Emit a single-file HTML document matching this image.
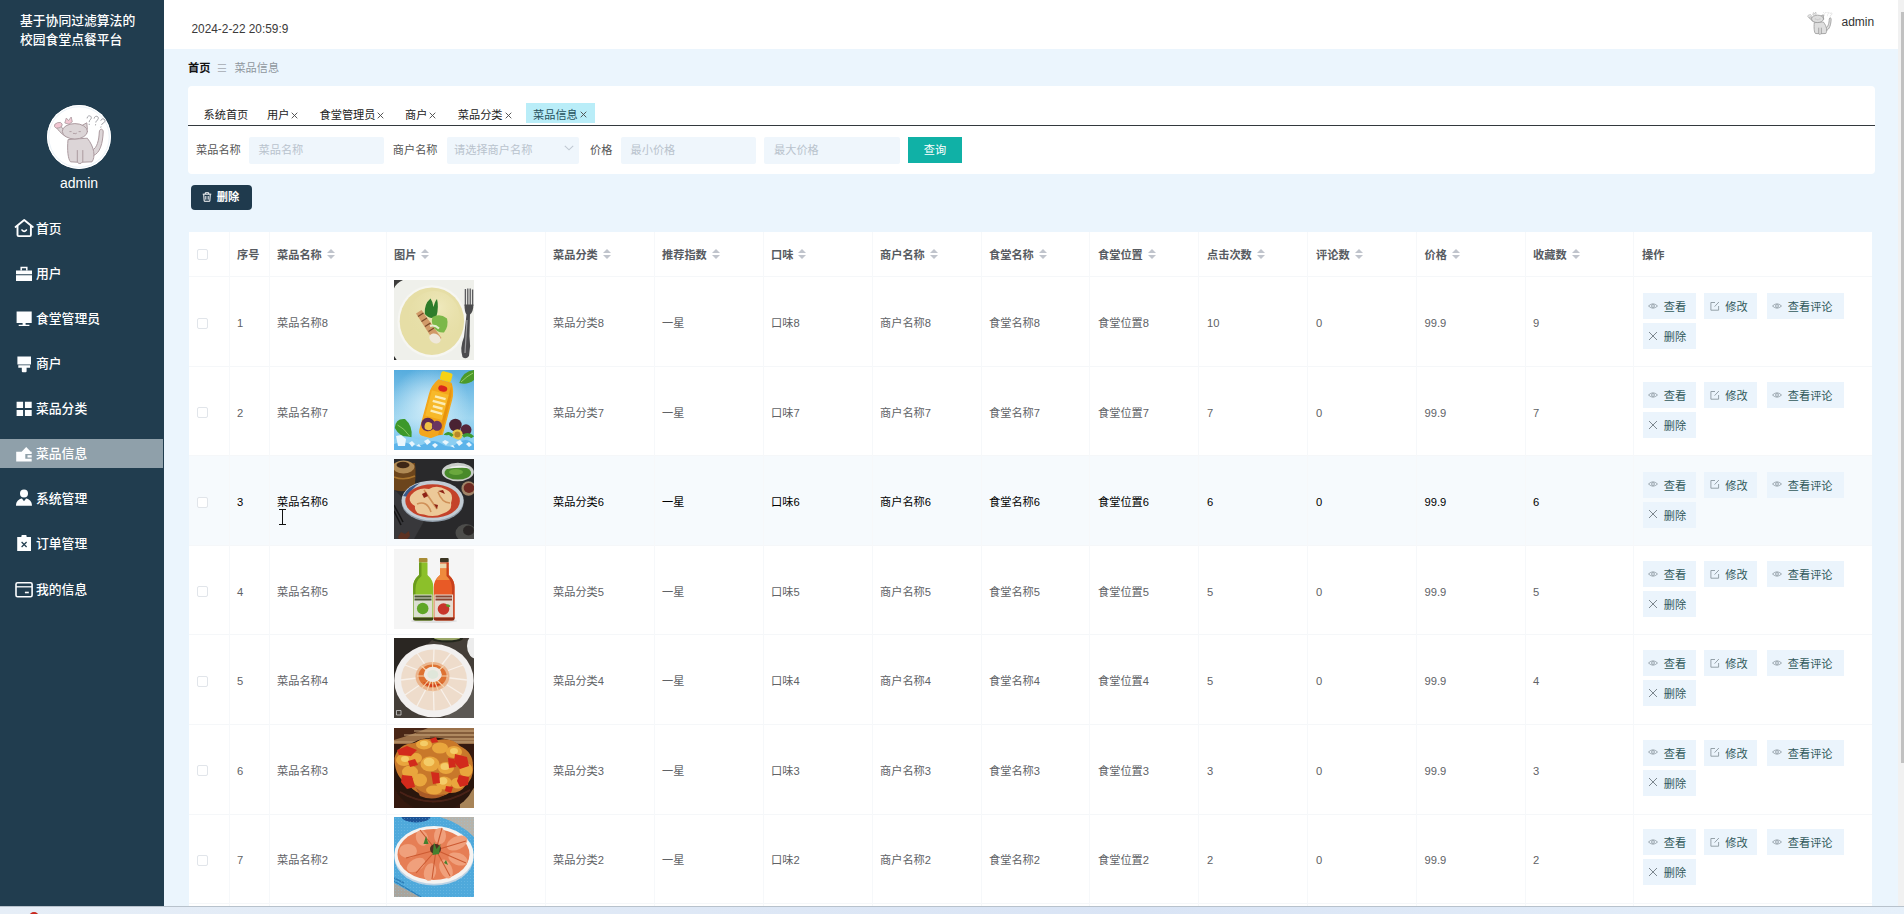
<!DOCTYPE html>
<html lang="zh-CN"><head><meta charset="utf-8"><title>菜品信息</title>
<style>
*{box-sizing:border-box;margin:0;padding:0}
html,body{width:1904px;height:914px;overflow:hidden;background:#ebf5fd;font-family:"Liberation Sans", "Noto Sans CJK SC", sans-serif;font-size:11.2px;color:#606266}
.abs{position:absolute}
#side{position:absolute;left:0;top:0;width:164px;height:906px;background:#213d4f;color:#fff}
#side .title{position:absolute;left:20px;top:11px;font-size:12.8px;line-height:19px;white-space:nowrap;color:#fff;font-weight:500}
#side .ava{position:absolute;left:47px;top:105px;width:64px;height:64px;border-radius:50%;background:#fff;overflow:hidden}
#side .uname{position:absolute;left:0;width:158px;top:174px;text-align:center;font-size:14px;line-height:18px;color:#fff}
.mi{position:absolute;left:0;width:163px;height:29px;line-height:29px;font-size:12.8px;color:#fff;white-space:nowrap;font-weight:500}
.mi svg{position:absolute;left:14px;top:4.5px;width:20px;height:20px}
.mi span{position:absolute;left:36px;top:0}
.mi.act{background:#8fa0aa}
#hdr{position:absolute;left:164px;top:0;width:1734px;height:48.6px;background:#fff}
#hdr .date{position:absolute;left:27.5px;top:21px;font-size:11.85px;line-height:16px;color:#3a3a3a}
#hdr .adm{position:absolute;left:1677.5px;top:14px;font-size:12px;line-height:16px;color:#333}
#hdr .sava{position:absolute;left:1643px;top:11.5px;width:24px;height:24px}
#bc{position:absolute;left:188px;top:60px;font-size:11.2px;line-height:16px;white-space:nowrap}
#bc b{color:#111;font-weight:bold}
#bc i{font-style:normal;color:#b0b6bd;margin:0 7.5px 0 6.5px;font-size:11px}
#bc span{color:#8f979e}
#card{position:absolute;left:188px;top:86px;width:1687px;height:87.8px;background:#fff;border-radius:4px}
#card .line{position:absolute;left:0;top:39px;width:1687px;height:1px;background:#33393e}
.tab{position:absolute;top:17px;height:23px;line-height:24.6px;font-size:11.2px;color:#222;white-space:nowrap;padding:0 8px}
.tab.act{background:#b9edf8;color:#27525e;top:16.5px;height:20.5px;line-height:25.6px;padding:0 8.6px 0 7.5px}
.tab em{font-style:normal;display:inline-block;width:7px;height:7px;margin-left:2px;position:relative;top:-0.1px}
.tab em svg{display:block;width:7px;height:7px}
.lbl{position:absolute;top:56px;line-height:16px;font-size:11.2px;color:#555}
.inp{position:absolute;top:50.5px;height:27px;background:#eff6fc;border-radius:2px;font-size:11.2px;line-height:27px;color:#b9c3cd;padding-left:10px;white-space:nowrap}
#qbtn{position:absolute;left:720px;top:50.7px;width:54px;height:26.6px;background:#10b1a6;color:#fff;font-size:11.2px;line-height:26px;text-align:center}
#del{position:absolute;left:191px;top:185px;width:61px;height:25px;background:#1f3a4d;border-radius:4px;color:#fff;font-size:11.2px;font-weight:bold;line-height:25px}
#del svg{position:absolute;left:10.5px;top:7px;width:10px;height:10px}
#del span{position:absolute;left:25.8px;top:0.3px}
#tbl{position:absolute;left:189px;top:232px;width:1683px;height:674px;background:#fff;overflow:hidden}
.hr{position:absolute;left:0;top:0;width:1684px;height:46.5px}
.hl{position:absolute;left:0;width:1684px;height:1px;background:#f5f7f9}
.hovbg{position:absolute;left:0;top:223.6px;width:1684px;height:89.6px;background:#f6fafd}
.th{position:absolute;top:14.6px;line-height:16px;font-weight:bold;color:#575b61;white-space:nowrap;font-size:11.2px}
.th i{display:inline-block;position:relative;width:8px;height:10px;margin-left:5px;vertical-align:-1px}
.th i:before{content:"";position:absolute;left:0;top:-0.8px;border:4px solid transparent;border-top-width:0;border-bottom:4px solid #c0c4cc}
.th i:after{content:"";position:absolute;left:0;top:5.5px;border:4px solid transparent;border-bottom-width:0;border-top:4px solid #c0c4cc}
.row{position:absolute;left:0;width:1684px;height:89.5px}
.row.hov{color:#000}
.td{position:absolute;top:36.5px;line-height:16px;white-space:nowrap;font-size:11.2px}
.cb{position:absolute;left:8px;width:11px;height:11px;border:1px solid #e1e5ea;border-radius:2px;background:#fff}
.img{position:absolute;left:205px;top:1.5px;width:80px;height:80px;overflow:hidden}
.img svg{display:block;width:80px;height:80px}
.vl{position:absolute;top:0;width:1px;height:674px;background:#f6f8fa}
.btn{position:absolute;height:26px;background:#ebf4fc;color:#30585a;font-size:11.2px;line-height:28.4px;white-space:nowrap}
.btn svg{position:absolute;left:5.8px;top:7.7px;width:10px;height:10px}
.btn span{position:absolute;left:21.3px;top:0}
#bot{position:absolute;left:0;top:906px;width:1904px;height:8px;background:linear-gradient(90deg,#e6eef7,#d9e4f5 60%,#e6f0fa);border-top:1px solid #b8c2cc}
#sb{position:absolute;left:1898px;top:0;width:6px;height:906px;background:#f1f1f1}
#sb div{position:absolute;left:3px;top:12px;width:3px;height:751px;background:#c1c1c1}
</style></head><body>
<div id="side">
<div class="title">基于协同过滤算法的<br>校园食堂点餐平台</div>
<div class="ava"><svg viewBox="0 0 64 64" width="64" height="64"><circle cx="32" cy="32" r="32" fill="#fff"/><circle cx="32" cy="32" r="30.3" fill="none" stroke="#e3edf5" stroke-width="0.8"/><g fill="#dcd5d7" stroke="#ab9a9f" stroke-width="1" stroke-linejoin="round" stroke-linecap="round"><path d="M45.5 45 C50 43.500 52 35 52.300 27 C52.500 23.300 56.300 23.300 56.200 27 C55.800 38 53 48.500 46.500 50.500Z"/><path d="M18.500 31.500 C14 28.500 11 25 8.800 21.500 L12.500 18.800 C14.500 23 17 25.500 21 27.500Z"/><path d="M21 35 C20 45 21 54 23.500 56.800 L30.500 57.200 C31 59 34.500 59 35 57.200 L45 56.800 C48.500 52 47.500 42 40.500 33.500Z"/><path d="M30.300 45.500 V56.800 M35.800 45.500 V56.800" fill="none"/><path d="M35 20.500 L39.800 17.800 L40.300 24Z"/><ellipse cx="27.900" cy="26.300" rx="12.600" ry="7.700"/></g><g fill="#f1c6d2" stroke="#ab9a9f" stroke-width="0.800" stroke-linejoin="round"><ellipse cx="11.300" cy="20.300" rx="4" ry="2.700" transform="rotate(-18 11.300 20.300)"/><path d="M17.800 18 L19.300 13 L21.500 15.600 L24.200 12 L25.300 16.800 L22 19.200Z"/></g><g fill="none" stroke="#ab9a9f" stroke-width="0.900" stroke-linecap="round"><path d="M22.800 26.600h1.400M32 26.600h1.400M26.200 28.300q0.900 1.100 1.700 0q0.900 1.100 1.700 0"/></g><g fill="none" stroke="#9a9a9f" stroke-width="0.900" stroke-linecap="round"><path transform="translate(42 15.2) rotate(0)" d="M-1.9 -2.2c0-2.9 4.2-2.9 4.2-0.3c0 2-2.1 2-2.1 4M0.2 4v0.4"/><path transform="translate(48.8 15.6) rotate(6)" d="M-1.9 -2.2c0-2.9 4.2-2.9 4.2-0.3c0 2-2.1 2-2.1 4M0.2 4v0.4"/><path transform="translate(55 18) rotate(18)" d="M-1.9 -2.2c0-2.9 4.2-2.9 4.2-0.3c0 2-2.1 2-2.1 4M0.2 4v0.4"/></g></svg></div>
<div class="uname">admin</div>
<div class="mi" style="top:213.5px"><svg viewBox="0 0 20 20"><path d="M1.600 8.900 L10.200 1.900 L18.800 8.900" fill="none" stroke="#fdfeff" stroke-width="1.900" stroke-linejoin="round" stroke-linecap="round"/><path d="M3.500 7.800 V16.900 Q3.500 18.100 4.700 18.100 H15.700 Q16.900 18.100 16.900 16.900 V7.800" fill="none" stroke="#fdfeff" stroke-width="1.900" stroke-linejoin="round"/><path d="M8 12 Q10.200 14.800 12.400 12" fill="none" stroke="#fdfeff" stroke-width="1.600" stroke-linecap="round"/></svg><span>首页</span></div>
<div class="mi" style="top:258.5px"><svg viewBox="0 0 20 20"><path d="M2 7.4H18V11.3H2Z M2 12.2H18V17.9H2Z" fill="#fdfeff"/><path d="M7.2 7.4V4.6H12.8V7.4" fill="none" stroke="#fdfeff" stroke-width="1.5"/></svg><span>用户</span></div>
<div class="mi" style="top:303.5px"><svg viewBox="0 0 20 20"><path d="M2.6 3.4H17.7V14.9H2.6Z M8.6 14.9H11.6V16.8H8.6Z M4.7 16.8H15.4V18H4.7Z" fill="#fdfeff"/></svg><span>食堂管理员</span></div>
<div class="mi" style="top:348.5px"><svg viewBox="0 0 20 20"><path d="M3.4 3.4H17V11.5H3.4Z M4.3 12.3H16.1V14.7H4.3Z M7.8 14.7H12.6V18.2Q12.6 19.2 11.6 19.2H8.8Q7.8 19.2 7.8 18.2Z" fill="#fdfeff"/></svg><span>商户</span></div>
<div class="mi" style="top:393.5px"><svg viewBox="0 0 20 20"><path d="M2.6 3.8H9.1V9.9H2.6Z M10.9 3.8H17.7V9.9H10.9Z M2.6 12.1H9.1V18H2.6Z M10.9 12.1H17.7V18H10.9Z" fill="#fdfeff"/></svg><span>菜品分类</span></div>
<div class="mi act" style="top:439.0px"><svg viewBox="0 0 20 20"><path d="M2.2 7.7H7.6L12.2 2.9L16.8 7.7H17.7V9.9H11.3V14.7H17.7V17.4H2.2Z M13.5 11.2H17.7V13.4H13.5Z" fill="#fdfeff"/></svg><span>菜品信息</span></div>
<div class="mi" style="top:483.5px"><svg viewBox="0 0 20 20"><circle cx="10" cy="5.6" r="4" fill="#fdfeff"/><path d="M2 17.8C2 13.4 4.6 11.2 7.9 10.6L10 13.2L12.1 10.6C15.4 11.2 18 13.4 18 17.8Z" fill="#fdfeff"/></svg><span>系统管理</span></div>
<div class="mi" style="top:528.5px"><svg viewBox="0 0 20 20"><path d="M3.2 3.9H7.4V2.9Q7.4 2.1 8.2 2.1H11.8Q12.6 2.1 12.6 2.9V3.9H17V17.9H3.2Z" fill="#fdfeff"/><path d="M7.6 9L12.6 14M12.6 9L7.6 14" stroke="#213d4f" stroke-width="1.2" fill="none"/></svg><span>订单管理</span></div>
<div class="mi" style="top:574.5px"><svg viewBox="0 0 20 20"><rect x="2" y="3.7" width="16.1" height="14.1" rx="1.6" fill="none" stroke="#fdfeff" stroke-width="1.6"/><path d="M2 7.8H18" stroke="#fdfeff" stroke-width="1.3"/><path d="M10.9 13.5H14.8" stroke="#fdfeff" stroke-width="1.6"/></svg><span>我的信息</span></div>
</div>
<div id="hdr"><div class="date">2024-2-22 20:59:9</div><div class="sava"><svg viewBox="6 12 54 50" width="26" height="24"><g fill="#dedede" stroke="#9c9c9c" stroke-width="1.8" stroke-linejoin="round" stroke-linecap="round"><path d="M45.5 45 C50 43.500 52 35 52.300 27 C52.500 23.300 56.300 23.300 56.200 27 C55.800 38 53 48.500 46.500 50.500Z"/><path d="M18.500 31.500 C14 28.500 11 25 8.800 21.500 L12.500 18.800 C14.500 23 17 25.500 21 27.500Z"/><path d="M21 35 C20 45 21 54 23.500 56.800 L30.500 57.200 C31 59 34.500 59 35 57.200 L45 56.800 C48.500 52 47.500 42 40.500 33.500Z"/><path d="M30.300 45.500 V56.800 M35.800 45.500 V56.800" fill="none"/><path d="M35 20.500 L39.800 17.800 L40.300 24Z"/><ellipse cx="27.900" cy="26.300" rx="12.600" ry="7.700"/></g><g fill="#e8e8e8" stroke="#9c9c9c" stroke-width="0.800" stroke-linejoin="round"><ellipse cx="11.300" cy="20.300" rx="4" ry="2.700" transform="rotate(-18 11.300 20.300)"/><path d="M17.800 18 L19.300 13 L21.500 15.600 L24.200 12 L25.300 16.800 L22 19.200Z"/></g><g fill="none" stroke="#9c9c9c" stroke-width="0.900" stroke-linecap="round"><path d="M22.800 26.600h1.400M32 26.600h1.400M26.200 28.300q0.900 1.100 1.700 0q0.900 1.100 1.700 0"/></g><g fill="none" stroke="#c8c8c8" stroke-width="0.900" stroke-linecap="round"><path transform="translate(42 15.2) rotate(0)" d="M-1.9 -2.2c0-2.9 4.2-2.9 4.2-0.3c0 2-2.1 2-2.1 4M0.2 4v0.4"/><path transform="translate(48.8 15.6) rotate(6)" d="M-1.9 -2.2c0-2.9 4.2-2.9 4.2-0.3c0 2-2.1 2-2.1 4M0.2 4v0.4"/><path transform="translate(55 18) rotate(18)" d="M-1.9 -2.2c0-2.9 4.2-2.9 4.2-0.3c0 2-2.1 2-2.1 4M0.2 4v0.4"/></g></svg></div><div class="adm">admin</div></div>
<div id="bc"><b>首页</b><i>☰</i><span>菜品信息</span></div>
<div id="card">
<div class="tab" style="left:7.50px">系统首页</div>
<div class="tab" style="left:71.00px">用户<em><svg viewBox="0 0 8 8"><path d="M0.8 0.8L7.2 7.2M7.2 0.8L0.8 7.2" stroke="#4a4a4a" stroke-width="1.05" fill="none"/></svg></em></div>
<div class="tab" style="left:123.50px">食堂管理员<em><svg viewBox="0 0 8 8"><path d="M0.8 0.8L7.2 7.2M7.2 0.8L0.8 7.2" stroke="#4a4a4a" stroke-width="1.05" fill="none"/></svg></em></div>
<div class="tab" style="left:209.00px">商户<em><svg viewBox="0 0 8 8"><path d="M0.8 0.8L7.2 7.2M7.2 0.8L0.8 7.2" stroke="#4a4a4a" stroke-width="1.05" fill="none"/></svg></em></div>
<div class="tab" style="left:261.75px">菜品分类<em><svg viewBox="0 0 8 8"><path d="M0.8 0.8L7.2 7.2M7.2 0.8L0.8 7.2" stroke="#4a4a4a" stroke-width="1.05" fill="none"/></svg></em></div>
<div class="tab act" style="left:337.50px">菜品信息<em><svg viewBox="0 0 8 8"><path d="M0.8 0.8L7.2 7.2M7.2 0.8L0.8 7.2" stroke="#4a4a4a" stroke-width="1.05" fill="none"/></svg></em></div>
<div class="line"></div>
<div class="lbl" style="left:8px">菜品名称</div><div class="inp" style="left:60.5px;width:135.5px">菜品名称</div>
<div class="lbl" style="left:204.75px">商户名称</div><div class="inp" style="left:258.5px;width:132.5px;padding-left:7.5px">请选择商户名称<svg style="position:absolute;left:117px;top:8.5px;width:10px;height:6px" viewBox="0 0 10 6"><path d="M0.8 0.8L5 4.8L9.2 0.8" fill="none" stroke="#c0c8d2" stroke-width="1.1"/></svg></div>
<div class="lbl" style="left:402px">价格</div><div class="inp" style="left:432.5px;width:135px">最小价格</div><div class="inp" style="left:576px;width:135.5px">最大价格</div>
<div id="qbtn">查询</div>
</div>
<div id="del"><svg viewBox="0 0 11 11"><path d="M0.8 2.4H10.2M3.6 2.2V0.8H7.4V2.2M1.9 2.6L2.4 10.2H8.6L9.1 2.6M4.2 4.4V8.4M6.8 4.4V8.4" fill="none" stroke="#fff" stroke-width="1.1"/></svg><span>删除</span></div>
<div id="tbl">
<div class="hovbg"></div>
<div class="hl" style="top:44.0px"></div><div class="hl" style="top:133.6px"></div><div class="hl" style="top:223.2px"></div><div class="hl" style="top:312.8px"></div><div class="hl" style="top:402.4px"></div><div class="hl" style="top:492.0px"></div><div class="hl" style="top:581.6px"></div><div class="hl" style="top:671.2px"></div>
<div class="vl" style="left:40.3px"></div><div class="vl" style="left:80.3px"></div><div class="vl" style="left:197.3px"></div><div class="vl" style="left:356.3px"></div><div class="vl" style="left:465.1px"></div><div class="vl" style="left:573.9px"></div><div class="vl" style="left:682.7px"></div><div class="vl" style="left:791.5px"></div><div class="vl" style="left:900.3px"></div><div class="vl" style="left:1009.1px"></div><div class="vl" style="left:1117.9px"></div><div class="vl" style="left:1226.7px"></div><div class="vl" style="left:1335.5px"></div><div class="vl" style="left:1444.3px"></div>
<div class="hr"><div class="cb" style="top:17px"></div><div class="th" style="left:48.0px">序号</div><div class="th" style="left:88.0px">菜品名称<i></i></div><div class="th" style="left:205.0px">图片<i></i></div><div class="th" style="left:364.0px">菜品分类<i></i></div><div class="th" style="left:473.0px">推荐指数<i></i></div><div class="th" style="left:582.0px">口味<i></i></div><div class="th" style="left:691.0px">商户名称<i></i></div><div class="th" style="left:800.0px">食堂名称<i></i></div><div class="th" style="left:909.0px">食堂位置<i></i></div><div class="th" style="left:1018.0px">点击次数<i></i></div><div class="th" style="left:1127.0px">评论数<i></i></div><div class="th" style="left:1235.5px">价格<i></i></div><div class="th" style="left:1344.0px">收藏数<i></i></div><div class="th" style="left:1453.0px">操作</div></div>
<div class="row" style="top:46.5px"><div class="cb" style="top:39px"></div><div class="td" style="left:48.0px">1</div><div class="td" style="left:88.0px">菜品名称8</div><div class="td" style="left:364.0px">菜品分类8</div><div class="td" style="left:473.0px">一星</div><div class="td" style="left:582.0px">口味8</div><div class="td" style="left:691.0px">商户名称8</div><div class="td" style="left:800.0px">食堂名称8</div><div class="td" style="left:909.0px">食堂位置8</div><div class="td" style="left:1018.0px">10</div><div class="td" style="left:1127.0px">0</div><div class="td" style="left:1235.5px">99.9</div><div class="td" style="left:1344.0px">9</div><div class="img"><svg viewBox="0 0 80 80"><defs><filter id="b1a" x="-20%" y="-20%" width="140%" height="140%"><feGaussianBlur stdDeviation="0.7"/></filter><filter id="b1b" x="-20%" y="-20%" width="140%" height="140%"><feGaussianBlur stdDeviation="1.8"/></filter><radialGradient id="s1" cx="0.6" cy="0.3" r="0.7"><stop offset="0" stop-color="#efe9bc"/><stop offset="1" stop-color="#e6dea6" stop-opacity="0"/></radialGradient></defs>
<rect width="80" height="80" fill="#eff0eb"/>
<g filter="url(#b1a)">
<path d="M0 0H9Q2 3 0 8.500Z" fill="#3c3c3a"/><path d="M0 80V76L2.700 80Z" fill="#2c2c2a"/>
<ellipse cx="38" cy="41.200" rx="34.500" ry="36" fill="#f6f6f2"/>
<ellipse cx="37.900" cy="41.200" rx="32.200" ry="33.700" fill="#e6dea6"/>
<ellipse cx="40" cy="38" rx="26" ry="27" fill="url(#s1)"/>
<path d="M22 33.500 L27.500 30 L47.500 58 L41 63 Z" fill="#d19a68"/>
<path d="M24 36.500 L29.500 33 M27.500 41.500 L33 38 M31 46.500 L36.500 43 M34.500 51.500 L40 48" stroke="#7a4a2a" stroke-width="1.300"/>
<ellipse cx="41" cy="58.500" rx="6" ry="4.600" fill="#efe8da" transform="rotate(30 41 58.500)"/>
<path d="M30.800 34 Q30 24 36.500 18.500 Q39 22 39.500 27 Q41 21 43 19 Q45 27 42.500 36 Q37 41 30.800 34Z" fill="#2f7c2c"/>
<path d="M38.500 37 Q46 33 53 38.500 Q55 46 50 52.500 Q43 53 39.500 47 Q37 42 38.500 37Z" fill="#7cb848"/>
<path d="M36 46 Q41 44.500 45 48.500" stroke="#e4efd0" stroke-width="2" fill="none"/>
</g>
<g filter="url(#b1a)">
<path d="M71.400 9 V26 M73.800 8.500 V26 M76.200 8.500 V26 M78.600 9.500 V26" stroke="#5c5c5e" stroke-width="1.350" fill="none"/>
<path d="M70.500 24.500 H79.400 Q79.400 32 76 34.500 L75.500 56 Q77 66 75 76 Q72 80 68.500 77 Q65.500 68 70 57 L72.500 34.500 Q70.500 32 70.500 24.500Z" fill="#4c4c4e"/>
<path d="M73 40 L71 73" stroke="#9a9a9c" stroke-width="1.200"/>
</g>
</svg></div><div class="btn" style="left:1453.5px;top:14.50px;width:53px"><svg viewBox="0 0 10 10"><path d="M0.5 5Q5 0.6 9.5 5Q5 9.4 0.5 5Z" fill="none" stroke="#8b979f" stroke-width="0.8"/><circle cx="5" cy="5" r="1.4" fill="none" stroke="#8b979f" stroke-width="0.8"/></svg><span>查看</span></div><div class="btn" style="left:1515px;top:14.50px;width:53px"><svg viewBox="0 0 10 10"><path d="M8.6 5V9.2H0.9V1.5H5" fill="none" stroke="#8b979f" stroke-width="0.9"/><path d="M4.6 5.6L8.9 1" stroke="#8b979f" stroke-width="0.9"/></svg><span>修改</span></div><div class="btn" style="left:1577.5px;top:14.50px;width:77px"><svg viewBox="0 0 10 10"><path d="M0.5 5Q5 0.6 9.5 5Q5 9.4 0.5 5Z" fill="none" stroke="#8b979f" stroke-width="0.8"/><circle cx="5" cy="5" r="1.4" fill="none" stroke="#8b979f" stroke-width="0.8"/></svg><span>查看评论</span></div><div class="btn" style="left:1453.5px;top:44.50px;width:53px"><svg viewBox="0 0 10 10"><path d="M1 1L9 9M9 1L1 9" stroke="#6f7b82" stroke-width="0.9" fill="none"/></svg><span>删除</span></div></div>
<div class="row" style="top:136.0px"><div class="cb" style="top:39px"></div><div class="td" style="left:48.0px">2</div><div class="td" style="left:88.0px">菜品名称7</div><div class="td" style="left:364.0px">菜品分类7</div><div class="td" style="left:473.0px">一星</div><div class="td" style="left:582.0px">口味7</div><div class="td" style="left:691.0px">商户名称7</div><div class="td" style="left:800.0px">食堂名称7</div><div class="td" style="left:909.0px">食堂位置7</div><div class="td" style="left:1018.0px">7</div><div class="td" style="left:1127.0px">0</div><div class="td" style="left:1235.5px">99.9</div><div class="td" style="left:1344.0px">7</div><div class="img"><svg viewBox="0 0 80 80"><defs><filter id="b2a" x="-20%" y="-20%" width="140%" height="140%"><feGaussianBlur stdDeviation="0.7"/></filter><filter id="b2b" x="-20%" y="-20%" width="140%" height="140%"><feGaussianBlur stdDeviation="1.8"/></filter><linearGradient id="g2" x1="0" y1="0" x2="0" y2="1"><stop offset="0" stop-color="#56acde"/><stop offset="0.6" stop-color="#9fd6f0"/><stop offset="1" stop-color="#6fc0ec"/></linearGradient><radialGradient id="r2" cx="0.45" cy="0.45" r="0.5"><stop offset="0" stop-color="#d9f0fa" stop-opacity="0.95"/><stop offset="1" stop-color="#d5effa" stop-opacity="0"/></radialGradient></defs>
<rect width="80" height="80" fill="url(#g2)"/>
<rect width="80" height="80" fill="url(#r2)"/>
<g filter="url(#b2a)">
<path d="M65.300 13 Q69 1 80 0 V10 Q73 15.500 65.300 13Z" fill="#4c9a2a"/>
<path d="M67 12 Q73 6 79 3" stroke="#a8d878" stroke-width="0.800" fill="none"/>
<path d="M0.800 58 Q1.500 48 11 49 Q19 56 17.500 67.500 Q6 68 0.800 58Z" fill="#3c982a"/>
<path d="M3.500 55 Q10 58 15.500 66" stroke="#9bd070" stroke-width="0.800" fill="none"/>
<g transform="rotate(15 42 38)">
<rect x="38" y="0.500" width="11.500" height="9" rx="2" fill="#f5d212"/>
<path d="M37 9.500 H50.500 Q55.500 17 55.500 26 V63 Q55.500 68.500 50.500 68.500 H36.500 Q31.500 68.500 31.500 63 V26 Q31.500 17 37 9.500Z" fill="#f3a61a"/>
<path d="M33.500 22 H53.500 V48 H33.500Z" fill="#f7b92a"/>
<path d="M50 11 Q54 18 54 27 V62 Q54 66 51 67 V11Z" fill="#e89410"/>
<ellipse cx="43.500" cy="17.500" rx="4.600" ry="3" fill="#d9251c"/>
<path d="M38 27 H49 M37 32 H50 M38.500 37 H48.500 M37.500 42 H49.500" stroke="#fcecb4" stroke-width="2.400"/>
<circle cx="38.500" cy="56" r="6.800" fill="#5c2a52"/><circle cx="39.500" cy="57.500" r="4" fill="#eec044"/>
<circle cx="47.500" cy="55" r="5" fill="#6a3560"/>
</g>
<circle cx="61.400" cy="55" r="6.300" fill="#4a2232"/><circle cx="72" cy="59.800" r="5.500" fill="#55283a"/>
<circle cx="63.400" cy="64.500" r="5.300" fill="#e8c848"/><circle cx="63.400" cy="64.500" r="3" fill="#b8862a"/>
<path d="M50 67 Q54 60.500 58.500 66 M69 66.500 Q74 62.500 79 67.500" stroke="#3c9a30" stroke-width="3.200" fill="none"/>
</g>
<g filter="url(#b2a)">
<path d="M0 69 Q10 64 20 68 T40 67 T60 68 T80 66.500 V80 H0Z" fill="#8ccff2"/>
<path d="M0 74 Q8 70.500 16 74 T32 73 T48 74 T64 73 T80 74 V80 H0Z" fill="#5cb4ea"/>
<path d="M2 66 l5 -1 l5 4 l-1 7 h-7z M15 73 l3-2 l3 3 l-3 3z M30 71 l4-2 l3 3 l-4 3z M38 75 l3-2 l3 2 l-3 3z M48 72 l3-2 l4 2 l-3 3z M62 72 l4-2 l3 3 l-4 3z M72 74 l3 -2 l3 3 l-3 2z M22 76 l3 -2 l2 3z M56 76 l3 -1 l2 3z" fill="#e9f6fd"/>
</g>
</svg></div><div class="btn" style="left:1453.5px;top:14.33px;width:53px"><svg viewBox="0 0 10 10"><path d="M0.5 5Q5 0.6 9.5 5Q5 9.4 0.5 5Z" fill="none" stroke="#8b979f" stroke-width="0.8"/><circle cx="5" cy="5" r="1.4" fill="none" stroke="#8b979f" stroke-width="0.8"/></svg><span>查看</span></div><div class="btn" style="left:1515px;top:14.33px;width:53px"><svg viewBox="0 0 10 10"><path d="M8.6 5V9.2H0.9V1.5H5" fill="none" stroke="#8b979f" stroke-width="0.9"/><path d="M4.6 5.6L8.9 1" stroke="#8b979f" stroke-width="0.9"/></svg><span>修改</span></div><div class="btn" style="left:1577.5px;top:14.33px;width:77px"><svg viewBox="0 0 10 10"><path d="M0.5 5Q5 0.6 9.5 5Q5 9.4 0.5 5Z" fill="none" stroke="#8b979f" stroke-width="0.8"/><circle cx="5" cy="5" r="1.4" fill="none" stroke="#8b979f" stroke-width="0.8"/></svg><span>查看评论</span></div><div class="btn" style="left:1453.5px;top:44.33px;width:53px"><svg viewBox="0 0 10 10"><path d="M1 1L9 9M9 1L1 9" stroke="#6f7b82" stroke-width="0.9" fill="none"/></svg><span>删除</span></div></div>
<div class="row hov" style="top:225.5px"><div class="cb" style="top:39px"></div><div class="td" style="left:48.0px">3</div><div class="td" style="left:88.0px">菜品名称6</div><div class="td" style="left:364.0px">菜品分类6</div><div class="td" style="left:473.0px">一星</div><div class="td" style="left:582.0px">口味6</div><div class="td" style="left:691.0px">商户名称6</div><div class="td" style="left:800.0px">食堂名称6</div><div class="td" style="left:909.0px">食堂位置6</div><div class="td" style="left:1018.0px">6</div><div class="td" style="left:1127.0px">0</div><div class="td" style="left:1235.5px">99.9</div><div class="td" style="left:1344.0px">6</div><div class="img"><svg viewBox="0 0 80 80"><defs><filter id="b3a" x="-20%" y="-20%" width="140%" height="140%"><feGaussianBlur stdDeviation="0.7"/></filter><filter id="b3b" x="-20%" y="-20%" width="140%" height="140%"><feGaussianBlur stdDeviation="1.8"/></filter></defs>
<rect width="80" height="80" fill="#29292b"/>
<g filter="url(#b3a)">
<path d="M0 30 L30 62 L20 80 H0Z" fill="#37373a"/>
<path d="M0 46 L9 63 M0 52 L7 66" stroke="#151517" stroke-width="1.500"/>
<path d="M0 4 H21 Q22.500 18 20 30 Q10 34 0 31Z" fill="#6c441a"/>
<path d="M0 18 Q10 22 21 17" stroke="#a8742e" stroke-width="1.600" fill="none"/>
<ellipse cx="9.500" cy="8" rx="11" ry="6.500" fill="#b08a54"/><ellipse cx="9" cy="6" rx="6.500" ry="3.300" fill="#3e2612"/>
<ellipse cx="63.800" cy="13" rx="16" ry="9.200" fill="#c9cdc9"/><ellipse cx="63.800" cy="14" rx="13.300" ry="6.600" fill="#4a8a2c"/>
<path d="M52 10 Q63 4 76 9 Q64 8 52 10Z" fill="#eef0ee"/>
<ellipse cx="62" cy="13" rx="7" ry="3" fill="#6aa83e"/>
<ellipse cx="74.500" cy="29.500" rx="7" ry="7.300" fill="#a08468"/><ellipse cx="75" cy="29" rx="5.300" ry="5" fill="#6e2a20"/>
<ellipse cx="72" cy="74" rx="10.500" ry="9" fill="#4e4e4c"/><ellipse cx="74.500" cy="71.500" rx="5.500" ry="5" fill="#2a2826"/>
<path d="M4 78 l3 -5 l4 2 l4 -3 l1 5 l-3 3 h-8 z" fill="#5c3020"/>
<ellipse cx="38.600" cy="43.500" rx="31" ry="19.500" fill="#8e9aa6"/>
<ellipse cx="38.600" cy="41.500" rx="31" ry="20" fill="#c2ccd4"/>
<path d="M9 37 Q14 27 26 24 Q18 29 14 38Z" fill="#3a5a8a"/>
<ellipse cx="38.600" cy="42" rx="27.300" ry="16.800" fill="#c4432a"/>
<path d="M17 36 Q24 27.500 35 30 Q43 25.500 52 30.500 Q60.500 34 57 44 Q58.500 52 49 54.500 Q40 59 30 55.500 Q20 55 21 47 Q13 42 17 36Z" fill="#ecc998"/>
<path d="M30 31 L43 50 M23 45 Q33 41 37 53 M44 33 Q48 44 56 44" stroke="#cf9058" stroke-width="1.600" fill="none"/>
<path d="M28 35 l4 -2 l2 4 l-4 2z M44 32 l5 -1 l2 4z M40 45 l4 1 l-1 4z" fill="#8e2416"/>
</g>
</svg></div><div class="btn" style="left:1453.5px;top:14.16px;width:53px"><svg viewBox="0 0 10 10"><path d="M0.5 5Q5 0.6 9.5 5Q5 9.4 0.5 5Z" fill="none" stroke="#8b979f" stroke-width="0.8"/><circle cx="5" cy="5" r="1.4" fill="none" stroke="#8b979f" stroke-width="0.8"/></svg><span>查看</span></div><div class="btn" style="left:1515px;top:14.16px;width:53px"><svg viewBox="0 0 10 10"><path d="M8.6 5V9.2H0.9V1.5H5" fill="none" stroke="#8b979f" stroke-width="0.9"/><path d="M4.6 5.6L8.9 1" stroke="#8b979f" stroke-width="0.9"/></svg><span>修改</span></div><div class="btn" style="left:1577.5px;top:14.16px;width:77px"><svg viewBox="0 0 10 10"><path d="M0.5 5Q5 0.6 9.5 5Q5 9.4 0.5 5Z" fill="none" stroke="#8b979f" stroke-width="0.8"/><circle cx="5" cy="5" r="1.4" fill="none" stroke="#8b979f" stroke-width="0.8"/></svg><span>查看评论</span></div><div class="btn" style="left:1453.5px;top:44.16px;width:53px"><svg viewBox="0 0 10 10"><path d="M1 1L9 9M9 1L1 9" stroke="#6f7b82" stroke-width="0.9" fill="none"/></svg><span>删除</span></div></div>
<div class="row" style="top:315.0px"><div class="cb" style="top:39px"></div><div class="td" style="left:48.0px">4</div><div class="td" style="left:88.0px">菜品名称5</div><div class="td" style="left:364.0px">菜品分类5</div><div class="td" style="left:473.0px">一星</div><div class="td" style="left:582.0px">口味5</div><div class="td" style="left:691.0px">商户名称5</div><div class="td" style="left:800.0px">食堂名称5</div><div class="td" style="left:909.0px">食堂位置5</div><div class="td" style="left:1018.0px">5</div><div class="td" style="left:1127.0px">0</div><div class="td" style="left:1235.5px">99.9</div><div class="td" style="left:1344.0px">5</div><div class="img"><svg viewBox="0 0 80 80"><defs><filter id="b4a" x="-20%" y="-20%" width="140%" height="140%"><feGaussianBlur stdDeviation="0.7"/></filter><filter id="b4b" x="-20%" y="-20%" width="140%" height="140%"><feGaussianBlur stdDeviation="1.8"/></filter></defs>
<rect width="80" height="80" fill="#f5f5f5"/>
<g filter="url(#b4a)">
<ellipse cx="40" cy="72" rx="23" ry="2" fill="#e0e0e0"/>
<rect x="24.900" y="9" width="8.600" height="4.600" rx="1" fill="#a88c34"/>
<path d="M25 13.500 H33.500 V26 Q39.300 31 39.300 38 V69.500 Q39.300 71.500 37 71.500 H21.500 Q19.100 71.500 19.100 69.500 V38 Q19.100 31 25 26Z" fill="#8cc02a"/>
<path d="M25 13.500 H27.500 V27 Q21.500 32 21.500 40 V69 H19.100 V38 Q19.100 31 25 26Z" fill="#6a9c1c"/>
<rect x="19.600" y="45.500" width="18.800" height="23" fill="#dcdfd2"/>
<path d="M20.500 47.500 H37.500 M20.500 50.500 H37.500" stroke="#4c5834" stroke-width="1.900"/>
<circle cx="28.700" cy="59.500" r="5.800" fill="#5fa628"/>
<path d="M19.100 68.500 H39.300 V70 Q39.300 71.500 37 71.500 H21.500 Q19.100 71.500 19.100 70Z" fill="#3a4414"/>
<rect x="46" y="9" width="8.700" height="4.600" rx="1" fill="#3a3622"/>
<path d="M46 13.500 H54.700 V26 Q60.500 31 60.500 38 V69.500 Q60.500 71.500 58 71.500 H42.200 Q39.800 71.500 39.800 69.500 V38 Q39.800 31 46 26Z" fill="#e85a28"/>
<path d="M46 14.500 H54.700 V19.500 H46Z" fill="#ead8ae"/>
<path d="M46 19.500 H54.700 V26 Q57 28 58.500 31 H42 Q43.500 28 46 26Z" fill="#ef8a3c"/>
<path d="M52.500 13.500 H54.700 V26 Q60.500 31 60.500 38 V69 H58 V40 Q58 32 52.500 27Z" fill="#c8401c"/>
<rect x="40.400" y="45.500" width="18.700" height="23" fill="#e6dcd2"/>
<path d="M41.500 47.500 H58 M41.500 50.500 H58" stroke="#8a4430" stroke-width="1.900"/>
<circle cx="49.500" cy="60" r="5.800" fill="#c8352a"/><path d="M51.500 56 q3 -2 5 1 q-2 3 -5 -1z" fill="#5a9a2c"/>
<path d="M39.800 68.500 H60.500 V70 Q60.500 71.500 58 71.500 H42.200 Q39.800 71.500 39.800 70Z" fill="#8a2a14"/>
</g>
</svg></div><div class="btn" style="left:1453.5px;top:13.99px;width:53px"><svg viewBox="0 0 10 10"><path d="M0.5 5Q5 0.6 9.5 5Q5 9.4 0.5 5Z" fill="none" stroke="#8b979f" stroke-width="0.8"/><circle cx="5" cy="5" r="1.4" fill="none" stroke="#8b979f" stroke-width="0.8"/></svg><span>查看</span></div><div class="btn" style="left:1515px;top:13.99px;width:53px"><svg viewBox="0 0 10 10"><path d="M8.6 5V9.2H0.9V1.5H5" fill="none" stroke="#8b979f" stroke-width="0.9"/><path d="M4.6 5.6L8.9 1" stroke="#8b979f" stroke-width="0.9"/></svg><span>修改</span></div><div class="btn" style="left:1577.5px;top:13.99px;width:77px"><svg viewBox="0 0 10 10"><path d="M0.5 5Q5 0.6 9.5 5Q5 9.4 0.5 5Z" fill="none" stroke="#8b979f" stroke-width="0.8"/><circle cx="5" cy="5" r="1.4" fill="none" stroke="#8b979f" stroke-width="0.8"/></svg><span>查看评论</span></div><div class="btn" style="left:1453.5px;top:43.99px;width:53px"><svg viewBox="0 0 10 10"><path d="M1 1L9 9M9 1L1 9" stroke="#6f7b82" stroke-width="0.9" fill="none"/></svg><span>删除</span></div></div>
<div class="row" style="top:404.5px"><div class="cb" style="top:39px"></div><div class="td" style="left:48.0px">5</div><div class="td" style="left:88.0px">菜品名称4</div><div class="td" style="left:364.0px">菜品分类4</div><div class="td" style="left:473.0px">一星</div><div class="td" style="left:582.0px">口味4</div><div class="td" style="left:691.0px">商户名称4</div><div class="td" style="left:800.0px">食堂名称4</div><div class="td" style="left:909.0px">食堂位置4</div><div class="td" style="left:1018.0px">5</div><div class="td" style="left:1127.0px">0</div><div class="td" style="left:1235.5px">99.9</div><div class="td" style="left:1344.0px">4</div><div class="img"><svg viewBox="0 0 80 80"><defs><filter id="b5a" x="-20%" y="-20%" width="140%" height="140%"><feGaussianBlur stdDeviation="0.7"/></filter><filter id="b5b" x="-20%" y="-20%" width="140%" height="140%"><feGaussianBlur stdDeviation="1.8"/></filter></defs>
<rect width="80" height="80" fill="#443e38"/>
<g filter="url(#b5a)">
<path d="M0 0 H40 L0 40Z" fill="#2c2622"/>
<path d="M80 80 H50 L80 50Z" fill="#5c5852"/>
<ellipse cx="53" cy="0.500" rx="16" ry="4" fill="#23261a"/><ellipse cx="53" cy="0" rx="13" ry="2.300" fill="#9aa668"/>
<ellipse cx="83" cy="8" rx="10" ry="13" fill="#ececec"/>
<ellipse cx="40" cy="42.700" rx="39.700" ry="36.600" fill="#f2f0ef"/>
<ellipse cx="40" cy="42" rx="33" ry="30.500" fill="#eedccb"/>
<g stroke="#f8f1ea" stroke-width="1.300">
<path d="M39 38 L40 11 M39 38 L57 15 M39 38 L69 27 M39 38 L73 42 M39 38 L69 57 M39 38 L57 68 M39 38 L40 73 M39 38 L23 68 M39 38 L11 57 M39 38 L7 42 M39 38 L11 27 M39 38 L23 15"/>
</g>
<ellipse cx="38.500" cy="38.500" rx="17" ry="14.500" fill="#eab48c"/>
<ellipse cx="38.500" cy="38" rx="14" ry="11.500" fill="#de7232"/>
<path d="M29 44 Q38 54 49 44 Q40 49 29 44Z" fill="#d23c1a"/>
<g stroke="#f6d4ae" stroke-width="1.100"><path d="M38.500 38 L38.500 24 M38.500 38 L49.500 28 M38.500 38 L54 38 M38.500 38 L50 49 M38.500 38 L39 54 M38.500 38 L28 50 M38.500 38 L23 38 M38.500 38 L27.500 28 M38.500 38 L44.500 53 M38.500 38 L33 53"/></g>
<ellipse cx="38.800" cy="36.400" rx="9" ry="7.700" fill="#efe9e2"/>
<ellipse cx="38.800" cy="36.400" rx="5.500" ry="4.500" fill="#dfe6da"/>
</g>
<path d="M2.500 72.500 h4.500 v4.500 h-4.500z" fill="none" stroke="#ddd" stroke-width="0.700"/>
</svg></div><div class="btn" style="left:1453.5px;top:13.82px;width:53px"><svg viewBox="0 0 10 10"><path d="M0.5 5Q5 0.6 9.5 5Q5 9.4 0.5 5Z" fill="none" stroke="#8b979f" stroke-width="0.8"/><circle cx="5" cy="5" r="1.4" fill="none" stroke="#8b979f" stroke-width="0.8"/></svg><span>查看</span></div><div class="btn" style="left:1515px;top:13.82px;width:53px"><svg viewBox="0 0 10 10"><path d="M8.6 5V9.2H0.9V1.5H5" fill="none" stroke="#8b979f" stroke-width="0.9"/><path d="M4.6 5.6L8.9 1" stroke="#8b979f" stroke-width="0.9"/></svg><span>修改</span></div><div class="btn" style="left:1577.5px;top:13.82px;width:77px"><svg viewBox="0 0 10 10"><path d="M0.5 5Q5 0.6 9.5 5Q5 9.4 0.5 5Z" fill="none" stroke="#8b979f" stroke-width="0.8"/><circle cx="5" cy="5" r="1.4" fill="none" stroke="#8b979f" stroke-width="0.8"/></svg><span>查看评论</span></div><div class="btn" style="left:1453.5px;top:43.82px;width:53px"><svg viewBox="0 0 10 10"><path d="M1 1L9 9M9 1L1 9" stroke="#6f7b82" stroke-width="0.9" fill="none"/></svg><span>删除</span></div></div>
<div class="row" style="top:494.0px"><div class="cb" style="top:39px"></div><div class="td" style="left:48.0px">6</div><div class="td" style="left:88.0px">菜品名称3</div><div class="td" style="left:364.0px">菜品分类3</div><div class="td" style="left:473.0px">一星</div><div class="td" style="left:582.0px">口味3</div><div class="td" style="left:691.0px">商户名称3</div><div class="td" style="left:800.0px">食堂名称3</div><div class="td" style="left:909.0px">食堂位置3</div><div class="td" style="left:1018.0px">3</div><div class="td" style="left:1127.0px">0</div><div class="td" style="left:1235.5px">99.9</div><div class="td" style="left:1344.0px">3</div><div class="img"><svg viewBox="0 0 80 80"><defs><filter id="b6a" x="-20%" y="-20%" width="140%" height="140%"><feGaussianBlur stdDeviation="0.7"/></filter><filter id="b6b" x="-20%" y="-20%" width="140%" height="140%"><feGaussianBlur stdDeviation="1.8"/></filter></defs>
<rect width="80" height="80" fill="#35190f"/>
<g filter="url(#b6a)">
<rect width="80" height="16" fill="#9a7048"/>
<path d="M0 0 H34 Q20 6 0 12Z" fill="#4a2818"/>
<path d="M20 3 H80 M10 7 H80 M30 11 H80 M0 14 H80" stroke="#c4a27a" stroke-width="1.100"/>
<path d="M22 5 H80 M36 9 H80" stroke="#6e4a2c" stroke-width="1"/>
<path d="M66 80 V68 Q74 66 80 60 V80Z" fill="#a88458"/>
<ellipse cx="40" cy="47" rx="42" ry="37.500" fill="#2b150e"/>
<path d="M6 64 Q40 84 76 62" stroke="#4a2418" stroke-width="2" fill="none"/>
</g>
<g filter="url(#b6a)">
<path d="M0.500 30 Q4 16 20 15 Q32 8.500 44 12 Q58 9 66 18 Q79 24 79 38 Q80 50 72 57 Q66 66 55 65 Q46 71 34 66.500 Q22 67 15 57 Q0.500 50 0.500 30Z" fill="#c8782c"/>
<g fill="#e9a63c">
<ellipse cx="10" cy="32" rx="8" ry="6"/><ellipse cx="30" cy="16.500" rx="8" ry="5"/><ellipse cx="46" cy="20" rx="8" ry="5.500"/><ellipse cx="60" cy="24" rx="8" ry="6"/>
<ellipse cx="72" cy="42" rx="6.500" ry="7"/><ellipse cx="52" cy="40" rx="8" ry="6"/><ellipse cx="36" cy="36" rx="9.500" ry="7.500"/><ellipse cx="16" cy="44" rx="8" ry="6.500"/>
<ellipse cx="26" cy="52" rx="7" ry="6.500"/><ellipse cx="50" cy="55" rx="8" ry="6.500"/><ellipse cx="64" cy="55" rx="7" ry="5.500"/><ellipse cx="40" cy="62" rx="8" ry="4.500"/>
<ellipse cx="22" cy="30" rx="6" ry="5"/>
</g>
<g fill="#f4cc68">
<ellipse cx="35" cy="34" rx="5.500" ry="4.200"/><ellipse cx="30" cy="15.500" rx="4" ry="2.800"/><ellipse cx="51" cy="38.500" rx="4.500" ry="3.500"/><ellipse cx="49" cy="53" rx="4.500" ry="3.800"/><ellipse cx="11" cy="31" rx="4" ry="3"/><ellipse cx="60" cy="23" rx="4" ry="3"/>
</g>
<g fill="#d22a1a">
<path d="M3 22 l10 -4 l10 4 l-6 6 l-12 -1z"/><path d="M14 33 l7 -2 l3 6 l-8 2z"/><path d="M61 26 l12 3 l2 9 l-9 3 l-6 -7z"/><path d="M65 47 l10 2 l-1 8 l-8 2 l-3 -6z"/>
<path d="M8 47 l10 1 l3 11 l-8 2 l-6 -7z"/><path d="M37 44 l8 1 l1 10 l-7 1z"/><path d="M54 30 l6 1 l2 8 l-7 1z"/><path d="M36 11 l6 -2 l2 5 l-6 1z"/><path d="M52 58 l7 1 l-2 6 l-6 -2z"/>
</g>
<path d="M22 60 Q34 70 52 66 Q40 74 26 68Z" fill="#a85a26"/>
</g>
</svg></div><div class="btn" style="left:1453.5px;top:13.65px;width:53px"><svg viewBox="0 0 10 10"><path d="M0.5 5Q5 0.6 9.5 5Q5 9.4 0.5 5Z" fill="none" stroke="#8b979f" stroke-width="0.8"/><circle cx="5" cy="5" r="1.4" fill="none" stroke="#8b979f" stroke-width="0.8"/></svg><span>查看</span></div><div class="btn" style="left:1515px;top:13.65px;width:53px"><svg viewBox="0 0 10 10"><path d="M8.6 5V9.2H0.9V1.5H5" fill="none" stroke="#8b979f" stroke-width="0.9"/><path d="M4.6 5.6L8.9 1" stroke="#8b979f" stroke-width="0.9"/></svg><span>修改</span></div><div class="btn" style="left:1577.5px;top:13.65px;width:77px"><svg viewBox="0 0 10 10"><path d="M0.5 5Q5 0.6 9.5 5Q5 9.4 0.5 5Z" fill="none" stroke="#8b979f" stroke-width="0.8"/><circle cx="5" cy="5" r="1.4" fill="none" stroke="#8b979f" stroke-width="0.8"/></svg><span>查看评论</span></div><div class="btn" style="left:1453.5px;top:43.65px;width:53px"><svg viewBox="0 0 10 10"><path d="M1 1L9 9M9 1L1 9" stroke="#6f7b82" stroke-width="0.9" fill="none"/></svg><span>删除</span></div></div>
<div class="row" style="top:583.5px"><div class="cb" style="top:39px"></div><div class="td" style="left:48.0px">7</div><div class="td" style="left:88.0px">菜品名称2</div><div class="td" style="left:364.0px">菜品分类2</div><div class="td" style="left:473.0px">一星</div><div class="td" style="left:582.0px">口味2</div><div class="td" style="left:691.0px">商户名称2</div><div class="td" style="left:800.0px">食堂名称2</div><div class="td" style="left:909.0px">食堂位置2</div><div class="td" style="left:1018.0px">2</div><div class="td" style="left:1127.0px">0</div><div class="td" style="left:1235.5px">99.9</div><div class="td" style="left:1344.0px">2</div><div class="img"><svg viewBox="0 0 80 80"><defs><filter id="b7a" x="-20%" y="-20%" width="140%" height="140%"><feGaussianBlur stdDeviation="0.7"/></filter><filter id="b7b" x="-20%" y="-20%" width="140%" height="140%"><feGaussianBlur stdDeviation="1.8"/></filter><pattern id="c7" width="3" height="3" patternUnits="userSpaceOnUse"><circle cx="1.500" cy="1.500" r="0.500" fill="#8ccdf0" fill-opacity="0.450"/></pattern></defs>
<rect width="80" height="80" fill="#4fa9db"/>
<g filter="url(#b7a)">
<path d="M46 0 H80 V20 Q66 6 46 0Z" fill="#b6b3ab"/>
<path d="M0 66 L26 80 H0Z" fill="#a9a59d"/>
<path d="M0 64 L27 80 M0 61 L10 66" stroke="#2f80ba" stroke-width="1.400"/>
<ellipse cx="22" cy="-0.500" rx="14.500" ry="6" fill="#1c5296"/>
<path d="M0 0 H80 V80 H0Z" fill="url(#c7)"/>
<ellipse cx="40" cy="41" rx="39.500" ry="27.500" fill="#bcd2e4"/>
<ellipse cx="40" cy="37.900" rx="39.700" ry="28.900" fill="#f5f3f1"/>
<ellipse cx="39.500" cy="37.500" rx="36" ry="25.500" fill="#e67e54"/>
<g fill="#f0a07c">
<ellipse cx="14" cy="34" rx="9" ry="7"/><ellipse cx="22" cy="48" rx="10" ry="6" transform="rotate(-30 22 48)"/><ellipse cx="36" cy="55" rx="6" ry="9" transform="rotate(15 36 55)"/>
<ellipse cx="52" cy="52" rx="6" ry="10" transform="rotate(-25 52 52)"/><ellipse cx="64" cy="42" rx="10" ry="6" transform="rotate(20 64 42)"/><ellipse cx="63" cy="26" rx="11" ry="6.500" transform="rotate(-25 63 26)"/>
<ellipse cx="46" cy="19" rx="6" ry="8"/><ellipse cx="28" cy="21" rx="6" ry="8" transform="rotate(-20 28 21)"/>
</g>
<g stroke="#cc5a32" stroke-width="1.100" fill="none">
<path d="M42 33 L12 41 M42 33 L22 56 M42 33 L38 62 M42 33 L56 59 M42 33 L72 46 M42 33 L72 24 M42 33 L48 11 M42 33 L26 13"/>
</g>
<ellipse cx="41.500" cy="32" rx="5.500" ry="5" fill="#4e2e22"/>
<path d="M38.500 38 l1.500 -13 l2.500 7 l4 -5 l-1.500 10z M29.500 27 l2.500 -8 l2.500 8z M50 46 l2 -3 l2 5z" fill="#44802e"/>
</g>
</svg></div><div class="btn" style="left:1453.5px;top:13.48px;width:53px"><svg viewBox="0 0 10 10"><path d="M0.5 5Q5 0.6 9.5 5Q5 9.4 0.5 5Z" fill="none" stroke="#8b979f" stroke-width="0.8"/><circle cx="5" cy="5" r="1.4" fill="none" stroke="#8b979f" stroke-width="0.8"/></svg><span>查看</span></div><div class="btn" style="left:1515px;top:13.48px;width:53px"><svg viewBox="0 0 10 10"><path d="M8.6 5V9.2H0.9V1.5H5" fill="none" stroke="#8b979f" stroke-width="0.9"/><path d="M4.6 5.6L8.9 1" stroke="#8b979f" stroke-width="0.9"/></svg><span>修改</span></div><div class="btn" style="left:1577.5px;top:13.48px;width:77px"><svg viewBox="0 0 10 10"><path d="M0.5 5Q5 0.6 9.5 5Q5 9.4 0.5 5Z" fill="none" stroke="#8b979f" stroke-width="0.8"/><circle cx="5" cy="5" r="1.4" fill="none" stroke="#8b979f" stroke-width="0.8"/></svg><span>查看评论</span></div><div class="btn" style="left:1453.5px;top:43.48px;width:53px"><svg viewBox="0 0 10 10"><path d="M1 1L9 9M9 1L1 9" stroke="#6f7b82" stroke-width="0.9" fill="none"/></svg><span>删除</span></div></div>
</div>
<svg class="abs" style="left:278px;top:508px" width="9" height="18" viewBox="0 0 9 18"><path d="M1 1.5h7M4.500 1.500v15M1 16.500h7" fill="none" stroke="#111" stroke-width="1" shape-rendering="crispEdges"/></svg>
<div id="sb"><div></div></div>
<div id="bot"></div>
<div class="abs" style="left:28.5px;top:912px;width:10.5px;height:10px;border-radius:50%;background:#c8281e"></div>
</body></html>
